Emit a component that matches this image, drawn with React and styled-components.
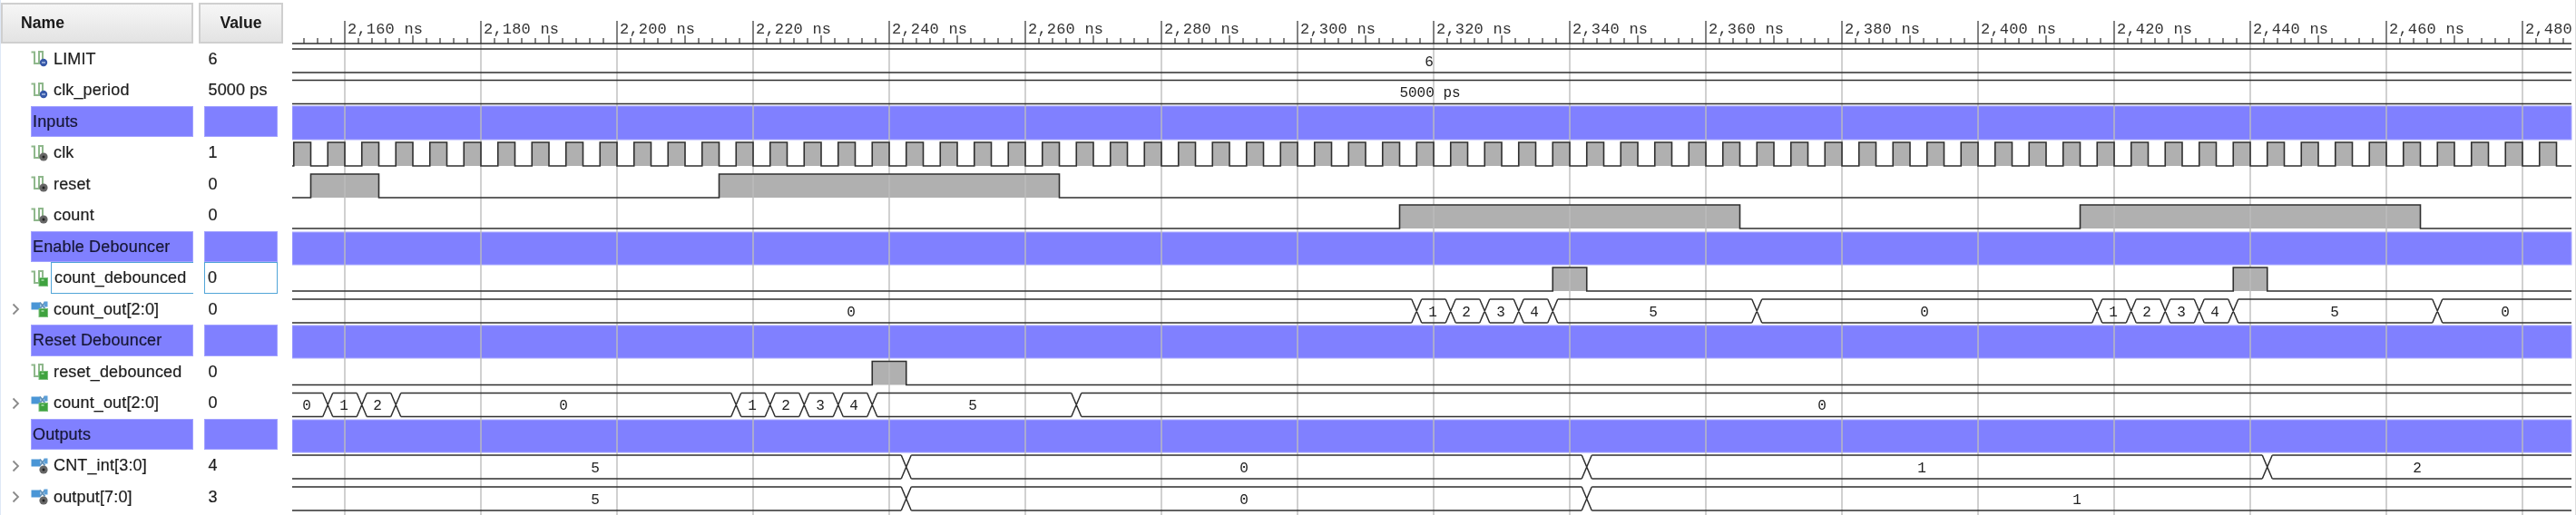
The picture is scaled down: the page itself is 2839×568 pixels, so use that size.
import React from "react";
import styled, { createGlobalStyle } from "styled-components";

const Global = createGlobalStyle`
  html, body { margin: 0; padding: 0; background: #fff; overflow: hidden; }
`;

const Page = styled.div`
  display: flex;
  width: 2839px;
  height: 568px;
  box-sizing: border-box;
  overflow: hidden;
  background: #fff;
  border-left: 1px solid #dfe8f6;
  border-right: 1px solid #dcdcdc;
  padding-top: 3px;
  font-family: "Liberation Sans", Arial, sans-serif;
  color: #1c1c1c;
  filter: blur(0.55px);
`;

const NamePane = styled.div`
  width: 212px;
  flex: none;
  display: flex;
  flex-direction: column;
`;

const ValuePane = styled.div`
  width: 93px;
  margin-left: 6px;
  flex: none;
  display: flex;
  flex-direction: column;
`;

const Header = styled.div`
  height: 44.75px;
  box-sizing: border-box;
  flex: none;
  display: flex;
  align-items: center;
  justify-content: ${(p) => (p.$center ? "center" : "flex-start")};
  padding-left: ${(p) => (p.$center ? "0" : "20px")};
  background: linear-gradient(#f6f6f6, #e3e3e3);
  border: 2px solid #cfcfcf;
  font-weight: 700;
  font-size: 17.6px;
  color: #1a1a1a;
`;

const NameRow = styled.div`
  height: 34.5px;
  flex: none;
  display: flex;
  align-items: center;
  font-size: 18px;
  letter-spacing: 0.15px;
  -webkit-text-stroke: 0.2px #1c1c1c;
`;

const Slot = styled.div`
  width: 33px;
  height: 100%;
  flex: none;
  display: flex;
  align-items: center;
  justify-content: center;
  padding-right: 1px;
  box-sizing: border-box;
`;

const Label = styled.div`
  flex: 1;
  height: 100%;
  box-sizing: border-box;
  margin-left: 3px;
  padding-left: 3px;
  display: flex;
  align-items: center;
  border: ${(p) => (p.$focus ? "1.5px solid #52a5d8" : "none")};
  border-right: none;
  white-space: nowrap;
`;

const GroupName = styled.div`
  flex: 1;
  height: 100%;
  box-sizing: border-box;
  display: flex;
  align-items: center;
  padding-left: 1px;
  background: #8080ff;
  border: 1px solid #a2a2ff;
  color: #15153a;
  white-space: nowrap;
`;

const ValueRow = styled.div`
  height: 34.5px;
  flex: none;
  box-sizing: border-box;
  margin: 0 6px;
  padding-left: ${(p) => (p.$focus ? "3px" : "4.5px")};
  display: flex;
  align-items: center;
  font-size: 18px;
  letter-spacing: 0.15px;
  -webkit-text-stroke: 0.2px #1c1c1c;
  white-space: nowrap;
  background: ${(p) => (p.$group ? "#8080ff" : "transparent")};
  border: ${(p) =>
    p.$group ? "1px solid #a2a2ff" : p.$focus ? "1.5px solid #52a5d8" : "none"};
`;

const WavePane = styled.div`
  margin-left: 10px;
  width: 2515px;
  margin-top: -3px;
  flex: none;
`;

const WaveSvg = styled.svg`
  display: block;
`;

const RulerText = styled.text`
  font-family: "Liberation Mono", "Courier New", monospace;
  font-size: 17px;
  letter-spacing: 0.2px;
  fill: #333;
`;

const BusText = styled.text`
  font-family: "Liberation Mono", "Courier New", monospace;
  font-size: 16px;
  fill: #222;
  text-anchor: middle;
`;

const X0 = 322;
const X1 = 2834;
const H = 26;
const INK = "#2f2f2f";

const Chevron = () => (
  <svg width="9" height="14" viewBox="0 0 9 14">
    <path d="M1.5 1.5 L7 7 L1.5 12.5" fill="none" stroke="#8a8a8a" strokeWidth="1.8" />
  </svg>
);

const Badge = ({ kind }) => {
  if (kind === "const")
    return (
      <>
        <circle cx="14" cy="13" r="4.2" fill="#3658a8" />
        <path d="M12 13h4" stroke="#cfdcf5" strokeWidth="1.2" />
      </>
    );
  if (kind === "int")
    return (
      <>
        <rect x="9" y="8.5" width="9.5" height="9" fill="#3fa23f" stroke="#7cc07c" />
        <path d="M11.5 11h3" stroke="#c8eec8" strokeWidth="1.2" />
      </>
    );
  return (
    <>
      <circle cx="14" cy="13" r="4.6" fill="#666" />
      <circle cx="14" cy="13" r="1.5" fill="#222" />
    </>
  );
};

const SignalIcon = ({ kind }) => (
  <svg width="19" height="18" viewBox="0 0 19 18">
    <path
      d="M0.5 1.5h3.5v12.5h5v-13h4v8"
      fill="none"
      stroke="#8fb88c"
      strokeWidth="2"
    />
    <Badge kind={kind} />
  </svg>
);

const BusIcon = ({ kind }) => (
  <svg width="19" height="18" viewBox="0 0 19 18">
    <rect x="0.5" y="1.5" width="10" height="8" fill="#4a96d6" />
    <path d="M10 1.5l5.5 7M15.5 1.5l-5.5 7" stroke="#5f8fb8" strokeWidth="1.8" />
    <rect x="14.5" y="0.5" width="4" height="6" fill="#5c9fd8" />
    <Badge kind={kind} />
  </svg>
);

function scalar(top, pulses, key) {
  const bot = top + H;
  let line = `M${X0} ${bot}`;
  pulses.forEach(([r, f]) => {
    line += `L${r} ${bot}L${r} ${top}L${Math.min(f, X1)} ${top}L${Math.min(f, X1)} ${bot}`;
  });
  line += `L${X1} ${bot}`;
  const fill = pulses
    .map(([r, f]) => `M${r} ${top}H${Math.min(f, X1)}V${bot}H${r}Z`)
    .join("");
  return { key, fill, line };
}

function bus(top, ts, labels, key) {
  const bot = top + H;
  const d = 5.5;
  let dTop = `M${X0} ${top}`;
  let dBot = `M${X0} ${bot}`;
  let dX = "";
  ts.forEach((t) => {
    dTop += `H${t - d}M${t + d} ${top}`;
    dBot += `H${t - d}M${t + d} ${bot}`;
    dX += `M${t - d} ${top}L${t + d} ${bot}M${t - d} ${bot}L${t + d} ${top}`;
  });
  dTop += `H${X1}`;
  dBot += `H${X1}`;
  return { key, top, dLines: dTop + dBot, dX, labels };
}

const clkPulses = [];
for (let r = 323.75; r < X1; r += 37.5) clkPulses.push([r, r + 18.75]);

const scalars = [
  scalar(157, clkPulses, "clk"),
  scalar(192, [[342.5, 417.5], [792.5, 1167.5]], "reset"),
  scalar(226, [[1542.5, 1917.5], [2292.5, 2667.5]], "count"),
  scalar(295, [[1711.25, 1748.75], [2461.25, 2498.75]], "count_debounced"),
  scalar(398.5, [[961.25, 998.75]], "reset_debounced"),
];

const buses = [
  bus(54, [], [[1575, "6"]], "LIMIT"),
  bus(88.5, [], [[1576, "5000 ps"]], "clk_period"),
  bus(
    330,
    [1561.25, 1598.75, 1636.25, 1673.75, 1711.25, 1936.25, 2311.25, 2348.75, 2386.25, 2423.75, 2461.25, 2686.25],
    [
      [938, "0"], [1579, "1"], [1616, "2"], [1654, "3"], [1691, "4"], [1822, "5"],
      [2121, "0"], [2329, "1"], [2366, "2"], [2404, "3"], [2441, "4"], [2573, "5"], [2761, "0"],
    ],
    "count_out_a"
  ),
  bus(
    433.5,
    [361.25, 398.75, 436.25, 811.25, 848.75, 886.25, 923.75, 961.25, 1186.25],
    [
      [338, "0"], [379, "1"], [416, "2"], [621, "0"], [829, "1"], [866, "2"], [904, "3"], [941, "4"],
      [1072, "5"], [2008, "0"],
    ],
    "count_out_b"
  ),
  bus(502, [998.75, 1748.75, 2498.75], [[656, "5"], [1371, "0"], [2118, "1"], [2664, "2"]], "CNT_int"),
  bus(537, [998.75, 1748.75], [[656, "5"], [1371, "0"], [2289, "1"]], "output"),
];

const bands = [
  [117, 37],
  [256, 36],
  [359, 36],
  [463, 36],
];

const ticks = [];
for (let x = 335; x < X1; x += 15) ticks.push(x);
const majors = [];
for (let x = 380, t = 2160; x < X1; x += 150, t += 20) majors.push([x, t]);

const fmt = (t) => {
  const text = `2,${String(t - 2000).padStart(3, "0")}`;
  return t === 2480 ? text : `${text} ns`;
};

const Wave = () => (
  <WaveSvg width={X1 - X0 + 3} height={568} viewBox={`${X0} 0 ${X1 - X0 + 3} 568`}>
    {bands.map(([y, h]) => (
      <rect key={y} x={X0} y={y} width={X1 - X0} height={h} fill="#8080ff" stroke="#a8a8ff" strokeWidth="1" />
    ))}
    {scalars.map((s) => (
      <path key={s.key} d={s.fill} fill="#b0b0b0" />
    ))}
    {majors.map(([x]) => (
      <path key={x} d={`M${x} 48V568`} stroke="#bdbdbd" strokeWidth="1.4" />
    ))}

    <path d={`M${X0} 48H${X1}`} stroke={INK} strokeWidth="1.6" />
    {ticks.map((x) => {
      const isMajor = (x - 380) % 150 === 0;
      const isMid = (x - 380) % 75 === 0;
      if (isMajor) return null;
      return <path key={x} d={`M${x} 48V${isMid ? 39 : 42}`} stroke={INK} strokeWidth="1.2" />;
    })}
    {majors.map(([x, t]) => (
      <g key={t}>
        <path d={`M${x} 23V48`} stroke={INK} strokeWidth="1.2" />
        <RulerText x={x + 3} y={37}>{fmt(t)}</RulerText>
      </g>
    ))}

    {scalars.map((s) => (
      <path key={s.key} d={s.line} fill="none" stroke={INK} strokeWidth="1.6" />
    ))}
    {buses.map((b) => (
      <g key={b.key}>
        <path d={b.dLines} fill="none" stroke={INK} strokeWidth="1.6" />
        <path d={b.dX} fill="none" stroke={INK} strokeWidth="1.5" />
        {b.labels.map(([x, text], i) => (
          <BusText key={i} x={x} y={b.top + 18.5}>{text}</BusText>
        ))}
      </g>
    ))}
  </WaveSvg>
);

const rows = [
  { name: "LIMIT", value: "6", icon: "const" },
  { name: "clk_period", value: "5000 ps", icon: "const" },
  { group: "Inputs" },
  { name: "clk", value: "1", icon: "input" },
  { name: "reset", value: "0", icon: "input" },
  { name: "count", value: "0", icon: "input" },
  { group: "Enable Debouncer" },
  { name: "count_debounced", value: "0", icon: "int", focus: true },
  { name: "count_out[2:0]", value: "0", icon: "int", bus: true },
  { group: "Reset Debouncer" },
  { name: "reset_debounced", value: "0", icon: "int" },
  { name: "count_out[2:0]", value: "0", icon: "int", bus: true },
  { group: "Outputs" },
  { name: "CNT_int[3:0]", value: "4", icon: "input", bus: true },
  { name: "output[7:0]", value: "3", icon: "input", bus: true },
];

export default function App() {
  return (
    <>
      <Global />
      <Page>
        <NamePane>
          <Header>Name</Header>
          {rows.map((r, i) => (
            <NameRow key={i}>
              <Slot>{r.bus && <Chevron />}</Slot>
              {r.group ? (
                <GroupName>{r.group}</GroupName>
              ) : (
                <>
                  {r.bus ? <BusIcon kind={r.icon} /> : <SignalIcon kind={r.icon} />}
                  <Label $focus={r.focus}>{r.name}</Label>
                </>
              )}
            </NameRow>
          ))}
        </NamePane>
        <ValuePane>
          <Header $center>Value</Header>
          {rows.map((r, i) => (
            <ValueRow key={i} $group={!!r.group} $focus={r.focus}>
              {r.value}
            </ValueRow>
          ))}
        </ValuePane>
        <WavePane>
          <Wave />
        </WavePane>
      </Page>
    </>
  );
}
